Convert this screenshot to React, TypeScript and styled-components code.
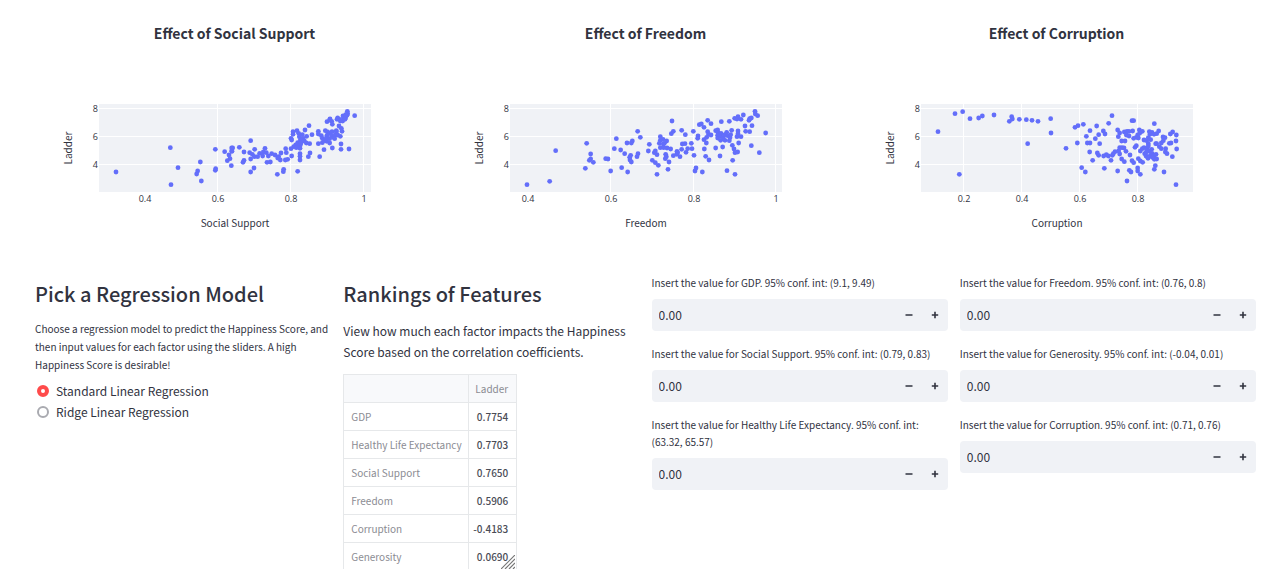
import React, { useId, useState } from "react";
import styled, { createGlobalStyle } from "styled-components";

const GlobalStyle = createGlobalStyle`
  *, *::before, *::after { box-sizing: border-box; }
  body {
    margin: 0;
    background: #fff;
    color: #31333f;
    font-family: "Noto Sans CJK SC", "Noto Sans", sans-serif;
    font-size: 12px;
    line-height: 21px;
  }
`;

const Page = styled.main`
  height: 100vh;
  overflow: hidden;
  padding: 20px 8px 0 35px;
`;

const ChartRow = styled.section`
  display: grid;
  grid-template-columns: repeat(3, minmax(0, 1fr));
  gap: 12px;
`;

const Figure = styled.figure`
  margin: 0;
  display: flex;
  flex-direction: column;
  align-items: center;
  gap: 50px;
`;

const ChartTitle = styled.h3`
  margin: 0;
  font-size: 14px;
  line-height: 26px;
  font-weight: 600;
`;

const Plot = styled.svg`
  display: block;
  flex: none;
`;

const TickText = styled.text`
  font-family: "Open Sans", sans-serif;
  font-size: 9px;
  fill: #31333f;
`;

const AxisText = styled.text`
  font-size: 10px;
  fill: #31333f;
  text-anchor: middle;
`;

const Columns = styled.section`
  display: grid;
  grid-template-columns: repeat(4, minmax(0, 1fr));
  gap: 12px;
  margin-top: 40px;
`;

const Column = styled.div`
  display: flex;
  flex-direction: column;
  align-items: stretch;
`;

const Heading = styled.h2`
  margin: 4px 0 10px;
  font-size: 20px;
  line-height: 32px;
  font-weight: 500;
`;

const Paragraph = styled.p`
  margin: 0 0 12px;
  font-size: 12px;
  line-height: 21px;
`;

const RadioGroup = styled.fieldset`
  margin: 0;
  padding: 0;
  border: 0;
  min-width: 0;
`;

const Legend = styled.legend`
  padding: 0;
  margin-bottom: 6px;
  font-size: 10px;
  line-height: 18px;
`;

const RadioLabel = styled.label`
  display: flex;
  align-items: center;
  gap: 7px;
  padding-left: 2px;
  font-size: 12px;
  line-height: 21px;
`;

const Radio = styled.input`
  appearance: none;
  width: 12px;
  height: 12px;
  margin: 0;
  border: 2px solid #a9aab0;
  border-radius: 50%;
  background: #fff;

  &:checked {
    border: 4px solid #ff4b4b;
  }
`;

const TableFrame = styled.div`
  position: relative;
  width: 174px;
`;

const Table = styled.table`
  width: 100%;
  border-collapse: collapse;
  font-size: 10px;
  line-height: 16px;

  th, td {
    height: 28px;
    padding: 0 8px 0 4px;
    border: 1px solid #e6e8ea;
    font-weight: 400;
    white-space: nowrap;
  }
  th { color: #8b8c93; text-align: left; }
  thead th { background: #f8f9fb; text-align: right; }
  th:first-child { padding: 0 6px 0 7px; }
  td { color: #4a4c56; text-align: right; font-weight: 500; }
`;

const ResizeGrip = styled.svg`
  position: absolute;
  right: 2px;
  bottom: 2px;
`;

const Field = styled.div`
  display: flex;
  flex-direction: column;
  gap: 8px;
  margin-bottom: 14px;
`;

const FieldLabel = styled.label`
  font-size: 10px;
  line-height: 17px;
`;

const NumberBox = styled.div`
  display: flex;
  align-items: center;
  height: 32px;
  border-radius: 4px;
  background: #f0f2f6;
`;

const NumberInput = styled.input`
  flex: 1;
  min-width: 0;
  height: 100%;
  padding: 0 7px 2px;
  border: 0;
  outline: 0;
  background: transparent;
  color: inherit;
  font: inherit;
  font-size: 12px;
`;

const StepButton = styled.button`
  display: grid;
  place-items: center;
  width: 26px;
  height: 100%;
  padding: 0;
  border: 0;
  background: transparent;
  color: inherit;
`;

type Point = [number, number];
type Tick = { label: string; at: number; grid?: boolean };
type ChartData = { title: string; name: string; left: number; ticks: Tick[]; low: Point[]; high: Point[] };

/* Points are stored in thirds of a pixel; the high half starts 420 units in. */
const HALF = 420;

const charts: ChartData[] = [
  {
    title: "Effect of Social Support",
    name: "Social Support",
    left: 27,
    ticks: [
      { label: "0.4", at: 46 },
      { label: "0.6", at: 119, grid: true },
      { label: "0.8", at: 192, grid: true },
      { label: "1", at: 265, grid: true },
    ],
    low: [[77,228],[240,155],[263,215],[242,266],[330,198],[322,225],[319,234],[333,255],[375,160],[376,218],[375,223],[403,167],[427,156],[424,165],[416,177],[419,188],[411,194],[423,209],[447,154]],
    high: [[4,156],[5,166],[61,134],[41,168],[41,193],[38,199],[58,170],[66,175],[61,189],[73,160],[72,182],[82,182],[71,216],[61,228],[88,172],[97,180],[99,168],[104,157],[108,170],[114,180],[124,173],[134,177],[142,186],[150,192],[145,182],[110,199],[120,198],[141,235],[160,220],[159,227],[152,171],[166,158],[168,170],[165,192],[172,190],[202,226],[184,180],[182,127],[188,107],[200,104],[205,112],[188,115],[207,122],[184,132],[224,102],[236,89],[245,116],[216,116],[229,121],[218,127],[222,135],[210,132],[202,140],[196,147],[190,152],[182,158],[210,147],[203,152],[212,141],[228,141],[238,143],[198,155],[209,157],[209,173],[209,181],[209,192],[239,171],[234,182],[268,182],[281,161],[264,143],[264,106],[264,114],[273,119],[276,127],[281,134],[276,140],[285,104],[292,108],[290,118],[299,112],[288,126],[298,128],[305,107],[304,120],[311,125],[315,116],[318,107],[322,117],[330,121],[335,106],[333,97],[326,90],[318,104],[289,136],[298,141],[306,156],[332,144],[332,160],[356,159],[313,128],[290,77],[298,72],[304,76],[306,85],[299,69],[320,70],[328,70],[322,66],[337,75],[340,66],[338,60],[346,65],[350,58],[352,53],[351,46],[346,56],[330,75],[344,70],[373,59]],
  },
  {
    title: "Effect of Freedom",
    name: "Freedom",
    left: 30,
    ticks: [
      { label: "0.4", at: 18 },
      { label: "0.6", at: 101, grid: true },
      { label: "0.8", at: 184, grid: true },
      { label: "1", at: 266, grid: true },
    ],
    low: [[80,266],[148,256],[166,164],[259,142],[271,174],[271,189],[267,193],[279,199],[255,217],[316,188],[323,189],[331,225],[348,128],[342,158],[361,162],[373,173],[364,215],[382,228],[380,141],[393,141],[396,135],[412,106],[420,124],[391,178],[388,184],[389,192],[393,198],[413,173],[410,182],[447,145],[444,165]],
    high: [[50,235],[36,193],[45,200],[54,208],[86,198],[83,220],[50,176],[42,170],[45,165],[60,122],[60,133],[57,142],[68,130],[79,135],[72,142],[60,155],[69,144],[70,155],[80,156],[91,159],[76,175],[78,182],[75,188],[95,75],[93,113],[99,106],[124,103],[135,116],[159,106],[99,179],[110,166],[109,175],[112,170],[119,182],[124,160],[126,144],[134,143],[137,169],[142,158],[153,142],[155,158],[161,178],[167,216],[164,225],[186,228],[173,120],[172,127],[177,86],[183,84],[191,94],[202,73],[212,83],[202,107],[205,115],[212,117],[191,131],[199,124],[198,141],[192,159],[196,181],[206,192],[226,156],[239,180],[247,153],[243,77],[267,76],[226,104],[232,102],[233,110],[232,118],[232,126],[240,120],[242,112],[241,133],[249,126],[252,117],[259,109],[254,133],[262,119],[269,125],[267,134],[274,103],[271,116],[276,148],[281,159],[284,170],[292,168],[277,193],[260,224],[284,235],[295,141],[290,122],[293,105],[302,122],[293,113],[316,106],[328,107],[335,89],[314,90],[283,67],[290,69],[293,62],[302,70],[309,57],[326,73],[333,66],[328,68],[344,46],[345,54],[352,59],[333,149],[357,170],[376,111]],
  },
  {
    title: "Effect of Corruption",
    name: "Corruption",
    left: 33,
    ticks: [
      { label: "0.2", at: 43, grid: true },
      { label: "0.4", at: 101, grid: true },
      { label: "0.6", at: 159, grid: true },
      { label: "0.8", at: 217, grid: true },
    ],
    low: [[83,107],[134,53],[157,47],[147,235],[179,68],[205,66],[216,60],[251,57],[297,76],[304,62],[306,69],[327,70],[348,71],[365,73],[383,76],[421,68],[422,111],[352,143]],
    high: [[47,157],[74,94],[83,89],[99,85],[119,104],[108,121],[81,141],[111,141],[119,141],[118,168],[94,215],[105,228],[127,193],[139,90],[145,116],[135,128],[148,143],[141,171],[145,178],[159,105],[164,114],[175,82],[185,59],[160,180],[168,176],[174,180],[186,178],[182,193],[162,217],[189,173],[194,167],[202,102],[208,111],[204,122],[214,135],[224,135],[202,225],[230,255],[208,174],[205,165],[208,155],[215,155],[221,156],[227,166],[214,189],[222,197],[239,177],[237,223],[242,228],[245,74],[250,74],[222,108],[230,106],[236,106],[247,105],[228,117],[236,120],[250,127],[258,124],[262,117],[264,126],[267,102],[268,112],[276,106],[258,149],[254,154],[245,194],[250,200],[264,188],[262,216],[262,225],[270,235],[270,195],[277,199],[270,165],[276,158],[281,155],[290,157],[281,132],[289,134],[294,125],[301,131],[294,143],[294,150],[299,115],[305,109],[311,115],[297,107],[319,113],[325,105],[312,83],[316,143],[319,143],[333,141],[327,152],[333,158],[304,160],[297,165],[283,173],[287,180],[293,187],[300,178],[305,172],[311,180],[312,190],[319,189],[306,184],[315,209],[312,220],[341,228],[338,123],[344,125],[339,134],[357,142],[360,114],[367,108],[378,117],[377,135],[362,141],[346,158],[345,168],[350,173],[379,159],[366,182],[377,266],[317,175],[288,168]],
  },
];

const PLOT_X = 40;
const PLOT_Y = 8;
const yTicks = [
  { label: "8", at: 4 },
  { label: "6", at: 32 },
  { label: "4", at: 60 },
];

function ScatterChart({ title, name, left, ticks, low, high }: ChartData) {
  const points = [...low, ...high.map(([x, y]): Point => [x + HALF, y])];
  return (
    <Figure>
      <ChartTitle>{title}</ChartTitle>
      <Plot width={351} height={138} role="img" aria-label={title}>
        <rect x={PLOT_X} y={PLOT_Y} width={272} height={88} fill="#f0f2f6" />
        {ticks.filter((t) => t.grid).map((t) => (
          <rect key={t.label} x={PLOT_X + t.at - 1} y={PLOT_Y} width={1} height={88} fill="#fff" />
        ))}
        {yTicks.map((t) => (
          <rect key={t.label} x={PLOT_X} y={PLOT_Y + t.at} width={272} height={1} fill="#fff" />
        ))}
        {points.map(([x, y], i) => (
          <circle key={i} cx={PLOT_X + (x + 1 - left) / 3} cy={y / 3} r={2.4} fill="#636efa" />
        ))}
        {yTicks.map((t) => (
          <TickText key={t.label} x={PLOT_X - 1} y={PLOT_Y + t.at + 4} textAnchor="end">{t.label}</TickText>
        ))}
        {ticks.map((t) => (
          <TickText key={t.label} x={PLOT_X + t.at} y={106} textAnchor="middle">{t.label}</TickText>
        ))}
        <AxisText x={PLOT_X + 136} y={131}>{name}</AxisText>
        <AxisText transform="translate(13 52) rotate(-90)">Ladder</AxisText>
      </Plot>
    </Figure>
  );
}

function NumberField({ label }: { label: string }) {
  const id = useId();
  const [value, setValue] = useState("0.00");
  const step = (d: number) => setValue((v) => ((Number(v) || 0) + d).toFixed(2));
  return (
    <Field>
      <FieldLabel htmlFor={id}>{label}</FieldLabel>
      <NumberBox>
        <NumberInput id={id} value={value} inputMode="decimal" onChange={(e) => setValue(e.target.value)} />
        <StepButton type="button" aria-label="Decrease" onClick={() => step(-0.01)}>
          <svg width="8" height="8" viewBox="0 0 8 8"><path d="M0.5 4H7.5" stroke="currentColor" strokeWidth="1.5" /></svg>
        </StepButton>
        <StepButton type="button" aria-label="Increase" onClick={() => step(0.01)}>
          <svg width="8" height="8" viewBox="0 0 8 8"><path d="M0.8 4H7.2M4 0.8V7.2" stroke="currentColor" strokeWidth="1.6" /></svg>
        </StepButton>
      </NumberBox>
    </Field>
  );
}

const rankings = [
  ["GDP", "0.7754"],
  ["Healthy Life Expectancy", "0.7703"],
  ["Social Support", "0.7650"],
  ["Freedom", "0.5906"],
  ["Corruption", "-0.4183"],
  ["Generosity", "0.0690"],
];

const models = ["Standard Linear Regression", "Ridge Linear Regression"];

export default function App() {
  const [model, setModel] = useState(models[0]);
  return (
    <Page>
      <GlobalStyle />
      <ChartRow>
        {charts.map((c) => <ScatterChart key={c.name} {...c} />)}
      </ChartRow>
      <Columns>
        <Column>
          <Heading>Pick a Regression Model</Heading>
          <RadioGroup>
            <Legend>
              Choose a regression model to predict the Happiness Score, and then input values for each factor using
              the sliders. A high Happiness Score is desirable!
            </Legend>
            {models.map((m) => (
              <RadioLabel key={m}>
                <Radio type="radio" name="model" checked={model === m} onChange={() => setModel(m)} />
                {m}
              </RadioLabel>
            ))}
          </RadioGroup>
        </Column>
        <Column>
          <Heading>Rankings of Features</Heading>
          <Paragraph>
            View how much each factor impacts the Happiness Score based on the correlation coefficients.
          </Paragraph>
          <TableFrame>
            <Table>
              <thead>
                <tr><th aria-label="Feature" /><th scope="col">Ladder</th></tr>
              </thead>
              <tbody>
                {rankings.map(([feature, score]) => (
                  <tr key={feature}><th scope="row">{feature}</th><td>{score}</td></tr>
                ))}
              </tbody>
            </Table>
            <ResizeGrip width="14" height="14" viewBox="0 0 14 14">
              <path d="M0 14L14 0M4 14L14 4M8 14L14 8M12 14L14 12" stroke="#777" strokeWidth="1.2" fill="none" />
            </ResizeGrip>
          </TableFrame>
        </Column>
        <Column>
          <NumberField label="Insert the value for GDP. 95% conf. int: (9.1, 9.49)" />
          <NumberField label="Insert the value for Social Support. 95% conf. int: (0.79, 0.83)" />
          <NumberField label="Insert the value for Healthy Life Expectancy. 95% conf. int: (63.32, 65.57)" />
        </Column>
        <Column>
          <NumberField label="Insert the value for Freedom. 95% conf. int: (0.76, 0.8)" />
          <NumberField label="Insert the value for Generosity. 95% conf. int: (-0.04, 0.01)" />
          <NumberField label="Insert the value for Corruption. 95% conf. int: (0.71, 0.76)" />
        </Column>
      </Columns>
    </Page>
  );
}
